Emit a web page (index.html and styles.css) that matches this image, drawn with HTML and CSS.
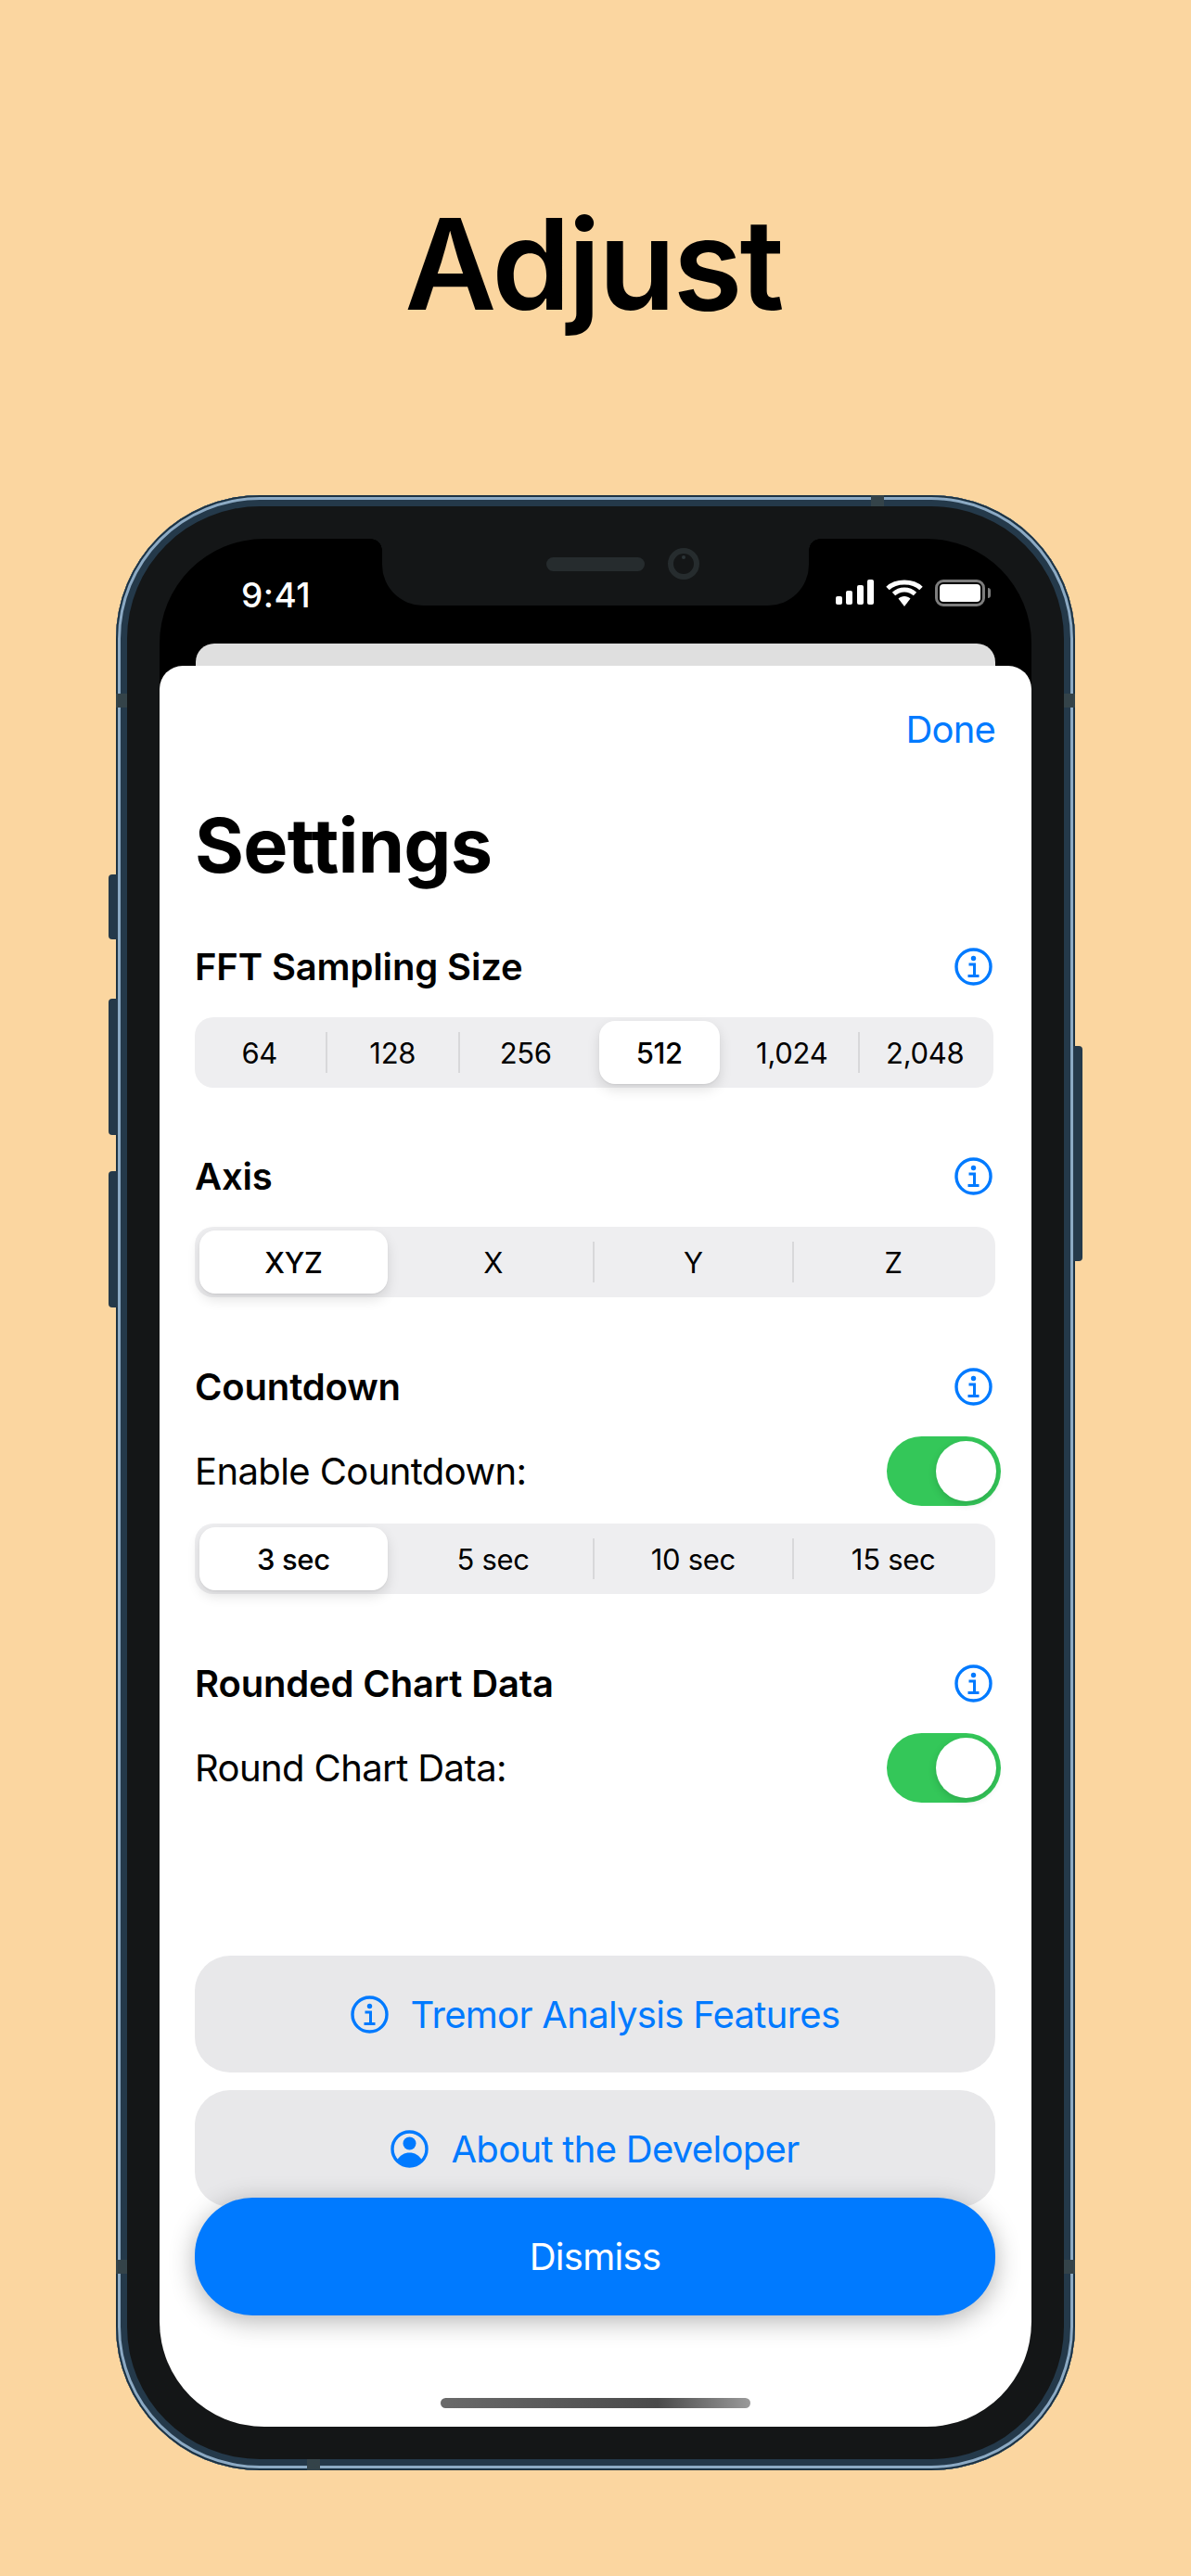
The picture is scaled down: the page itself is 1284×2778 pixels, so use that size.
FILE: index.html
```html
<!DOCTYPE html>
<html lang="en">
<head>
    <meta charset="UTF-8">
    <meta name="viewport" content="width=device-width, initial-scale=1.0">
    <title>Adjust</title>
    <link rel="stylesheet" href="styles.css">
</head>
<body>

<svg class="icon-defs" width="0" height="0">
    <symbol id="info" viewBox="0 0 41 41">
        <circle cx="20.5" cy="20.5" r="18.5" fill="none" stroke="currentColor" stroke-width="3.4"/>
        <circle cx="20.5" cy="11.5" r="2.7" fill="currentColor"/>
        <path d="M15.5 18h6v12M14.5 30.5h12" fill="none" stroke="currentColor" stroke-width="3"/>
    </symbol>
    <symbol id="person" viewBox="0 0 41 41">
        <circle cx="20.5" cy="20.5" r="18.5" fill="none" stroke="currentColor" stroke-width="3.4"/>
        <circle cx="20.5" cy="14.5" r="7" fill="currentColor"/>
        <path d="M7.500 32c3-5 7.500-7.500 13-7.500s10 2.500 13 7.500c-3.300 4-8 6.500-13 6.500s-9.700-2.500-13-6.500z" fill="currentColor"/>
    </symbol>
</svg>

<div class="page">
    <h1 class="headline">Adjust</h1>

    <div class="phone">
        <!-- hardware buttons -->
        <span class="hw hw-mute"></span>
        <span class="hw hw-up"></span>
        <span class="hw hw-down"></span>
        <span class="hw hw-power"></span>

        <!-- antenna marks -->
        <span class="mark mark-top"></span>
        <span class="mark mark-bottom"></span>
        <span class="mark mark-lt"></span>
        <span class="mark mark-rt"></span>
        <span class="mark mark-lb"></span>
        <span class="mark mark-rb"></span>

        <div class="screen">
            <div class="notch">
                <span class="speaker"></span>
                <span class="camera"></span>
            </div>

            <div class="status-bar">
                <span class="clock">9:41</span>
                <div class="status-icons">
                    <svg class="signal" width="41" height="27" viewBox="0 0 41 27">
                        <rect x="0" y="18" width="7" height="9" rx="2" fill="#fff"/>
                        <rect x="11" y="12" width="7" height="15" rx="2" fill="#fff"/>
                        <rect x="23" y="6" width="7" height="21" rx="2" fill="#fff"/>
                        <rect x="34" y="0" width="7" height="27" rx="2" fill="#fff"/>
                    </svg>
                    <svg class="wifi" width="40" height="29" viewBox="0 0 40 29">
                        <path d="M2 9.500C6.500 5.200 13 3 20 3s13.500 2.200 18 6.500" fill="none" stroke="#fff" stroke-width="5"/>
                        <path d="M8.500 15.500C11.500 12.800 15.500 11 20 11s8.500 1.800 11.500 4.500" fill="none" stroke="#fff" stroke-width="5"/>
                        <path d="M13.500 20.500c1.800-1.500 4-2.500 6.500-2.500s4.700 1 6.500 2.500L20 29z" fill="#fff"/>
                    </svg>
                    <div class="battery">
                        <span class="battery-level"></span>
                    </div>
                </div>
            </div>

            <div class="sheet-back"></div>

            <div class="sheet">
                <div class="done-row"><span class="done">Done</span></div>
                <h2 class="title">Settings</h2>

                <div class="section-head section-first">
                    <span>FFT Sampling Size</span>
                    <svg class="info"><use href="#info"/></svg>
                </div>
                <div class="segmented seg-narrow">
                    <div class="seg">64</div>
                    <div class="seg sep">128</div>
                    <div class="seg sep">256</div>
                    <div class="seg active">512</div>
                    <div class="seg">1,024</div>
                    <div class="seg sep">2,048</div>
                </div>

                <div class="section-head">
                    <span>Axis</span>
                    <svg class="info"><use href="#info"/></svg>
                </div>
                <div class="segmented">
                    <div class="seg active">XYZ</div>
                    <div class="seg">X</div>
                    <div class="seg sep">Y</div>
                    <div class="seg sep">Z</div>
                </div>

                <div class="section-head">
                    <span>Countdown</span>
                    <svg class="info"><use href="#info"/></svg>
                </div>
                <div class="toggle-row">
                    <span>Enable Countdown:</span>
                    <div class="toggle"><span class="knob"></span></div>
                </div>
                <div class="segmented">
                    <div class="seg active">3 sec</div>
                    <div class="seg">5 sec</div>
                    <div class="seg sep">10 sec</div>
                    <div class="seg sep">15 sec</div>
                </div>

                <div class="section-head">
                    <span>Rounded Chart Data</span>
                    <svg class="info"><use href="#info"/></svg>
                </div>
                <div class="toggle-row">
                    <span>Round Chart Data:</span>
                    <div class="toggle"><span class="knob"></span></div>
                </div>

                <div class="actions">
                    <div class="action">
                        <svg class="info"><use href="#info"/></svg>
                        <span>Tremor Analysis Features</span>
                    </div>
                    <div class="action">
                        <svg class="info"><use href="#person"/></svg>
                        <span>About the Developer</span>
                    </div>
                    <div class="dismiss">Dismiss</div>
                </div>

                <div class="home-indicator"></div>
            </div>
        </div>
    </div>
</div>

</body>
</html>
```

FILE: styles.css
```css
body {
    margin: 0;
    padding: 0;
    background-color: #fbd6a0;
    font-family: Inter, "Liberation Sans", sans-serif;
    color: #000;
}
.icon-defs {
    position: absolute;
}
.page {
    width: 1284px;
    height: 2778px;
    overflow: hidden;
    display: flex;
    flex-direction: column;
    align-items: center;
}
.headline {
    margin: 202px 0 0 0;
    padding-right: 5px;
    height: 332px;
    font-size: 136px;
    line-height: 165px;
    font-weight: 600;
    letter-spacing: -2.8px;
}

/* phone body */
.phone {
    position: relative;
    width: 1034px;
    height: 2130px;
    padding: 47px;
    box-sizing: border-box;
    background-color: #141617;
    border-radius: 155px;
    box-shadow: inset 0 0 0 2px #1c3242, inset 0 0 0 5px #8caac4, inset 0 0 0 12px #24394a;
}
.hw {
    position: absolute;
    width: 10px;
    left: -8px;
    background-color: #24394a;
    border-radius: 4px 0 0 4px;
}
.hw-mute { top: 409px; height: 70px; }
.hw-up { top: 543px; height: 147px; }
.hw-down { top: 729px; height: 147px; }
.hw-power {
    left: auto;
    right: -8px;
    top: 594px;
    height: 232px;
    border-radius: 0 4px 4px 0;
}
.mark {
    position: absolute;
    width: 12px;
    height: 15px;
    background-color: #344349;
}
.mark-top { top: 0; left: 814px; width: 14px; height: 12px; }
.mark-bottom { bottom: 0; left: 206px; width: 14px; height: 12px; }
.mark-lt { left: 0; top: 214px; }
.mark-rt { right: 0; top: 214px; }
.mark-lb { left: 0; top: 1903px; }
.mark-rb { right: 0; top: 1903px; }

.screen {
    position: relative;
    height: 2036px;
    background-color: #000;
    border-radius: 113px;
    overflow: hidden;
    display: flex;
    flex-direction: column;
}

/* notch */
.notch {
    position: absolute;
    top: 0;
    left: 240px;
    width: 460px;
    height: 72px;
    background-color: #141617;
    border-radius: 0 0 44px 44px;
}
.notch::before,
.notch::after {
    content: "";
    position: absolute;
    top: 0;
    width: 12px;
    height: 12px;
}
.notch::before {
    left: -12px;
    background: radial-gradient(circle at 0 100%, transparent 11.5px, #141617 12px);
}
.notch::after {
    right: -12px;
    background: radial-gradient(circle at 100% 100%, transparent 11.5px, #141617 12px);
}
.speaker {
    position: absolute;
    left: 177px;
    top: 20px;
    width: 106px;
    height: 15px;
    background-color: #262c2e;
    border-radius: 8px;
}
.camera {
    position: absolute;
    left: 308px;
    top: 10px;
    width: 34px;
    height: 34px;
    box-sizing: border-box;
    border: 6px solid #262c2e;
    border-radius: 50%;
}
.camera::after {
    content: "";
    position: absolute;
    left: 9px;
    top: 2px;
    width: 4px;
    height: 4px;
    background-color: #2c3538;
    border-radius: 50%;
}

/* status bar */
.status-bar {
    height: 113px;
    flex-shrink: 0;
    box-sizing: border-box;
    padding: 42px 44px 0 88px;
    display: flex;
    justify-content: space-between;
    align-items: flex-start;
    color: white;
}
.clock {
    font-size: 37px;
    line-height: 38px;
    font-weight: 500;
    letter-spacing: 0.5px;
}
.status-icons {
    display: flex;
    align-items: flex-start;
    gap: 13px;
    padding-top: 2px;
}
.battery {
    position: relative;
    width: 54px;
    height: 29px;
    box-sizing: border-box;
    border: 3px solid #7d7d7d;
    border-radius: 9px;
    padding: 2px;
    margin-right: 6px;
}
.battery::after {
    content: "";
    position: absolute;
    right: -9px;
    top: 6px;
    width: 3px;
    height: 11px;
    background-color: #7d7d7d;
    border-radius: 0 3px 3px 0;
}
.battery-level {
    display: block;
    height: 100%;
    background-color: white;
    border-radius: 4px;
}

.sheet-back {
    height: 24px;
    flex-shrink: 0;
    margin: 0 39px;
    background-color: #dfdfdf;
    border-radius: 20px 20px 0 0;
}

/* sheet */
.sheet {
    flex: 1;
    position: relative;
    background-color: white;
    border-radius: 25px 25px 0 0;
    padding: 0 39px 0 38px;
}
.done-row {
    display: flex;
    justify-content: flex-end;
    padding-top: 45px;
    height: 48px;
}
.done {
    color: #007aff;
    font-size: 40px;
    line-height: 48px;
    letter-spacing: -0.8px;
}
.title {
    margin: 53px 0 0 0;
    font-size: 81px;
    line-height: 97px;
    font-weight: 700;
    letter-spacing: -0.8px;
}
.section-head {
    display: flex;
    justify-content: space-between;
    align-items: center;
    height: 48px;
    margin: 72px 3px 0 0;
    font-size: 40px;
    font-weight: 600;
    letter-spacing: -0.15px;
}
.section-first {
    margin-top: 57px;
}
.info {
    width: 41px;
    height: 41px;
    color: #007aff;
    flex-shrink: 0;
}

/* segmented control */
.segmented {
    display: grid;
    grid-auto-flow: column;
    grid-auto-columns: 1fr;
    height: 76px;
    margin-top: 31px;
    padding: 4px 0;
    box-sizing: border-box;
    background-color: #eeeef0;
    border-radius: 20px;
}
.seg-narrow {
    margin-right: 2px;
    margin-bottom: -1px;
}
.seg {
    position: relative;
    display: flex;
    align-items: center;
    justify-content: center;
    margin: 0 2px 0 -2px;
    font-size: 31px;
    letter-spacing: -0.3px;
}
.seg.sep::before {
    content: "";
    position: absolute;
    left: -1px;
    top: 12px;
    bottom: 12px;
    width: 2px;
    background-color: #d8d8da;
}
.seg.active {
    margin: 0 8px 0 5px;
    background-color: white;
    border-radius: 17px;
    box-shadow: 0 6px 14px rgba(0, 0, 0, 0.12), 0 1px 2px rgba(0, 0, 0, 0.06);
    font-weight: 500;
}

/* toggle */
.toggle-row {
    display: flex;
    justify-content: space-between;
    align-items: center;
    height: 75px;
    margin: 30px -6px 0 0;
    font-size: 40px;
    letter-spacing: -0.6px;
}
.toggle-row + .segmented {
    margin-top: 19px;
}
.toggle {
    width: 123px;
    height: 75px;
    box-sizing: border-box;
    padding: 5px;
    display: flex;
    justify-content: flex-end;
    background-color: #34c759;
    border-radius: 38px;
}
.knob {
    width: 65px;
    height: 65px;
    background-color: white;
    border-radius: 50%;
    box-shadow: 0 3px 8px rgba(0, 0, 0, 0.15);
}

/* bottom buttons */
.actions {
    position: absolute;
    left: 38px;
    right: 39px;
    top: 1391px;
    display: flex;
    flex-direction: column;
    gap: 19px;
}
.action {
    display: flex;
    align-items: center;
    justify-content: center;
    gap: 24px;
    height: 126px;
    background-color: #e8e8ea;
    border-radius: 38px;
    color: #007aff;
    font-size: 40px;
    letter-spacing: -0.7px;
}
.dismiss {
    position: relative;
    display: flex;
    align-items: center;
    justify-content: center;
    height: 127px;
    margin-top: -29px;
    background-color: #007aff;
    border-radius: 62px;
    color: white;
    font-size: 40px;
    letter-spacing: -0.7px;
    box-shadow: 0 6px 28px rgba(0, 0, 0, 0.3);
}
.home-indicator {
    position: absolute;
    left: 303px;
    top: 1868px;
    width: 334px;
    height: 11px;
    border-radius: 6px;
    background: linear-gradient(90deg, #6a6a6a, #4a4a4a 70%, #9a9a9a);
}
```
